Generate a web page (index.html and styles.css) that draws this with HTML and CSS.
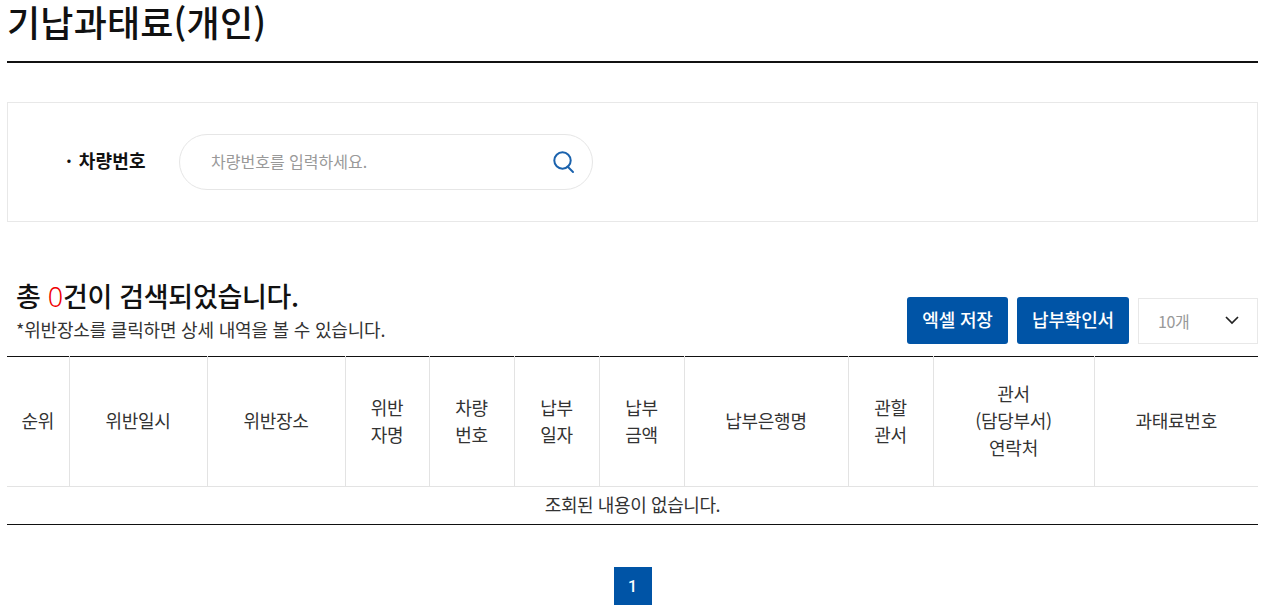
FILE: index.html
```html
<!DOCTYPE html>
<html lang="ko">
<head>
<meta charset="utf-8">
<title>기납과태료(개인)</title>
<link rel="stylesheet" href="styles.css">
</head>
<body>
<main class="page">
  <h1 class="title">기납과태료(개인)</h1>
  <section class="search">
    <label class="search-label" for="car">· 차량번호</label>
    <div class="search-box">
      <span class="placeholder" id="car">차량번호를 입력하세요.</span>
      <svg class="search-icon" viewBox="0 0 24 24" width="24" height="24" fill="none" stroke="#1a62ad" stroke-width="2"><circle cx="10.5" cy="10.5" r="8.2"/><path d="M15.5 16.5 L21 22" stroke-linecap="round"/></svg>
    </div>
  </section>
  <section class="result-head">
    <div class="result-text">
      <h2 class="count">총 <em>0</em>건이 검색되었습니다.</h2>
      <p class="hint">*위반장소를 클릭하면 상세 내역을 볼 수 있습니다.</p>
    </div>
    <div class="actions">
      <button class="btn btn-excel" type="button">엑셀 저장</button>
      <button class="btn btn-confirm" type="button">납부확인서</button>
      <div class="select"><span>10개</span>
        <svg viewBox="0 0 14 9" width="14" height="9" fill="none" stroke="#222" stroke-width="1.7"><path d="M1 1 L7 7 L13 1"/></svg>
      </div>
    </div>
  </section>
  <table class="grid">
    <thead>
      <tr>
        <th>순위</th><th>위반일시</th><th>위반장소</th><th>위반<br>자명</th><th>차량<br>번호</th><th>납부<br>일자</th><th>납부<br>금액</th><th>납부은행명</th><th>관할<br>관서</th><th>관서<br>(담당부서)<br>연락처</th><th>과태료번호</th>
      </tr>
    </thead>
    <tbody>
      <tr><td colspan="11">조회된 내용이 없습니다.</td></tr>
    </tbody>
  </table>
  <nav class="pager"><a class="page-num">1</a></nav>
</main>
</body>
</html>
```
FILE: styles.css
```css
* { box-sizing: border-box; }
html, body { margin: 0; padding: 0; background: #fff; }
body {
  font-family: "Noto Sans CJK KR", "Noto Sans", sans-serif;
  color: #222;
  overflow: hidden;
}
.page { padding: 0 10px 0 7px; width: 1268px; height: 615px; }
.title {
  margin: 0;
  height: 63px;
  font-size: 36px;
  line-height: 43px;
  font-weight: 500;
  letter-spacing: 0.2px;
  color: #111;
  border-bottom: 2px solid #111;
}
.search {
  margin-top: 39px;
  height: 120px;
  border: 1px solid #e8e8e8;
  display: flex;
  align-items: center;
  padding-left: 58px;
  padding-bottom: 1px;
}
.search-label {
  width: 113px;
  font-size: 18px;
  line-height: 24px;
  font-weight: 700;
  letter-spacing: 0.2px;
  word-spacing: 1.5px;
  color: #111;
  margin-top: -3px;
}
.search-box {
  width: 414px;
  height: 56px;
  border: 1px solid #e6e6e6;
  border-radius: 28px;
  display: flex;
  align-items: center;
  justify-content: space-between;
  padding: 0 16px 0 31px;
  margin-top: 1px;
}
.placeholder { font-size: 16px; line-height: 24px; color: #999; letter-spacing: 0; margin-top: -3px; }
.result-head {
  margin-top: 58px;
  height: 76px;
  display: flex;
  justify-content: space-between;
  align-items: flex-end;
  padding-left: 9px;
  padding-bottom: 12px;
}
.count {
  margin: 0;
  font-size: 27px;
  line-height: 36px;
  font-weight: 500;
  letter-spacing: -0.3px;
  color: #111;
  position: relative;
  top: -3px;
}
.count em {
  font-family: "Noto Sans", sans-serif;
  font-style: normal;
  font-weight: 300;
  color: #f00000;
}
.hint {
  margin: 0;
  font-size: 18px;
  line-height: 26px;
  letter-spacing: -0.2px;
  color: #333;
  position: relative;
  top: -2px;
}
.actions { display: flex; gap: 9px; align-items: center; }
.btn {
  height: 47px;
  border: 0;
  border-radius: 3px;
  background: #0054a6;
  color: #fff;
  font-family: inherit;
  font-size: 18px;
  line-height: 24px;
  font-weight: 500;
  letter-spacing: -0.2px;
  padding: 0 0 3px;
}
.btn-excel { width: 101px; }
.btn-confirm { width: 112px; }
.select {
  width: 120px;
  height: 46px;
  border: 1px solid #e8e8e8;
  display: flex;
  align-items: center;
  justify-content: space-between;
  padding: 0 18px 0 19px;
  font-size: 16px;
  color: #999;
  letter-spacing: -0.4px;
}
.grid {
  width: 1251px;
  border-collapse: collapse;
  table-layout: fixed;
  border-top: 1px solid #111;
  border-bottom: 1px solid #111;
}
.grid th {
  height: 130px;
  font-size: 18px;
  line-height: 27px;
  font-weight: 400;
  letter-spacing: -0.3px;
  color: #333;
  border-right: 1px solid #e3e3e3;
  border-bottom: 1px solid #e3e3e3;
  padding: 0 0 2px;
}
.grid th:last-child { border-right: 0; }
.grid th:nth-child(1) { width: 62px; }
.grid th:nth-child(2) { width: 138px; }
.grid th:nth-child(3) { width: 138px; }
.grid th:nth-child(4) { width: 84px; }
.grid th:nth-child(5) { width: 85px; }
.grid th:nth-child(6) { width: 85px; }
.grid th:nth-child(7) { width: 85px; }
.grid th:nth-child(8) { width: 164px; }
.grid th:nth-child(9) { width: 85px; }
.grid th:nth-child(10) { width: 161px; }
.grid td {
  height: 38px;
  padding: 0 0 3px;
  text-align: center;
  font-size: 18px;
  letter-spacing: -0.4px;
  color: #333;
}
.pager { margin-top: 42px; display: flex; justify-content: center; }
.page-num {
  width: 38px;
  height: 38px;
  background: #0054a6;
  color: #fff;
  font-family: Roboto, sans-serif;
  font-size: 16px;
  font-weight: 500;
  display: flex;
  align-items: center;
  justify-content: center;
}
```
